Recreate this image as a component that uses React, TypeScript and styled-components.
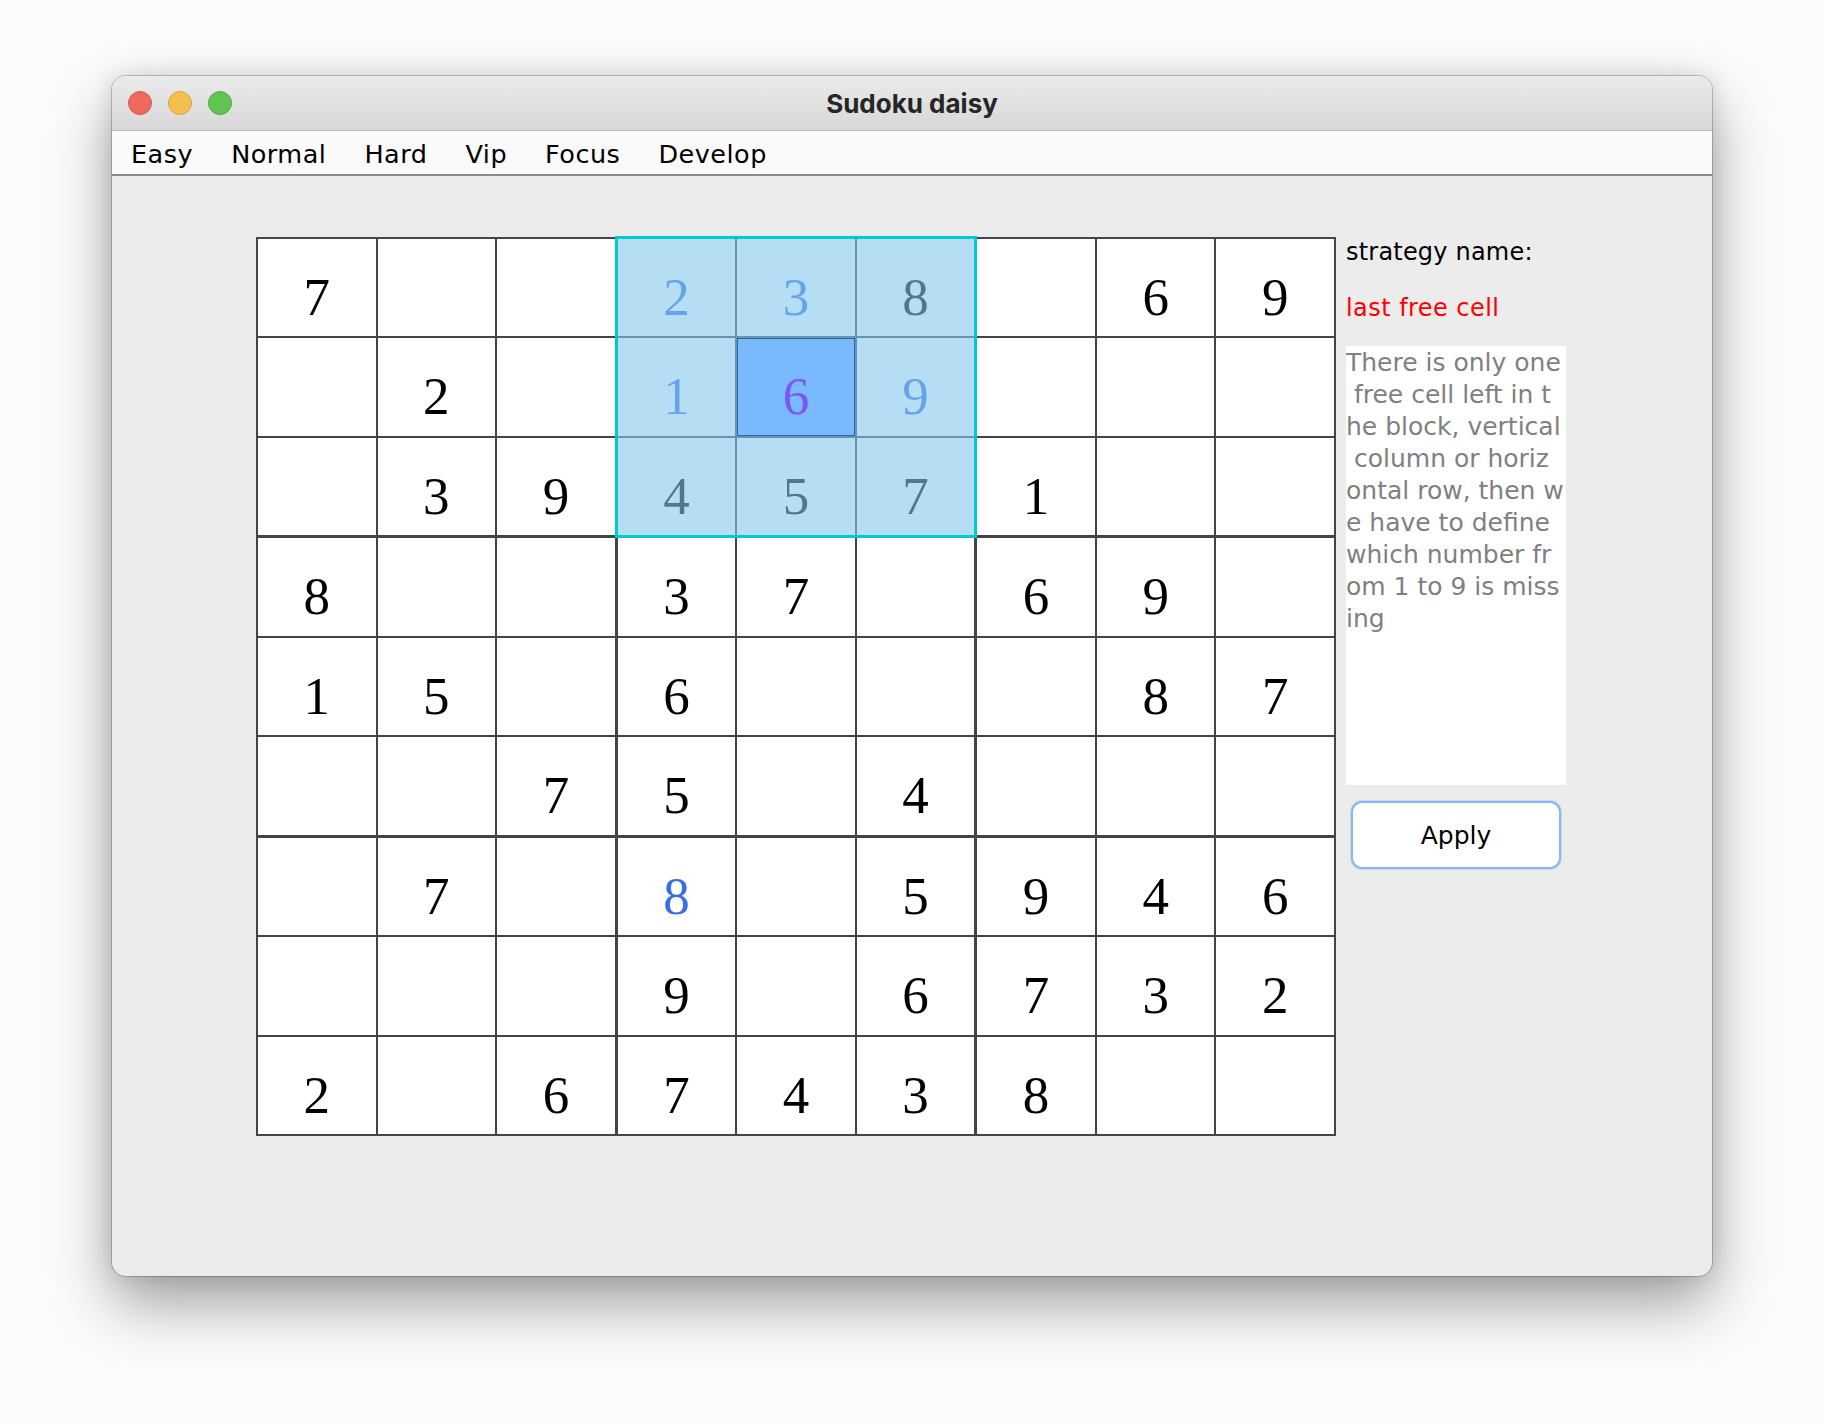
import styled, { createGlobalStyle } from 'styled-components';

const GlobalStyle = createGlobalStyle`
  html, body {
    margin: 0;
    padding: 0;
    background: #ffffff;
  }
  * {
    box-sizing: border-box;
  }
`;

const UI_FONT = `"DejaVu Sans", "Liberation Sans", sans-serif`;

const Page = styled.div`
  width: 1824px;
  height: 1424px;
  padding: 76px 112px;
  background: #fbfbfb;
`;

const Window = styled.div`
  width: 1600px;
  height: 1200px;
  border-radius: 14px;
  overflow: hidden;
  background: #ececec;
  display: flex;
  flex-direction: column;
  box-shadow: 0 0 0 1px rgba(0, 0, 0, 0.2), 0 28px 60px rgba(0, 0, 0, 0.36),
    0 0 24px rgba(0, 0, 0, 0.12);
`;

const TitleBar = styled.div`
  height: 55px;
  flex: none;
  display: flex;
  align-items: center;
  position: relative;
  background: linear-gradient(#ebebeb, #d7d7d7);
  border-bottom: 1px solid #bfbfbf;
  padding-left: 16px;
`;

const Lights = styled.div`
  display: flex;
  gap: 16px;
`;

const Light = styled.span<{ $fill: string; $edge: string }>`
  width: 24px;
  height: 24px;
  border-radius: 50%;
  background: ${(p) => p.$fill};
  border: 1px solid ${(p) => p.$edge};
`;

const Title = styled.div`
  position: absolute;
  left: 0;
  right: 0;
  text-align: center;
  font-family: Inter, "DejaVu Sans", sans-serif;
  font-weight: 700;
  font-size: 26px;
  color: #262626;
  pointer-events: none;
`;

const MenuBar = styled.nav`
  height: 45px;
  flex: none;
  display: flex;
  align-items: center;
  background: #fafafa;
  border-bottom: 2px solid #8c8c8c;
  padding-top: 3px;
`;

const MenuItem = styled.span`
  font-family: ${UI_FONT};
  font-size: 25.5px;
  letter-spacing: 0.5px;
  color: #000;
  padding: 0 19px;
`;

const Content = styled.div`
  flex: 1;
  display: flex;
  align-items: flex-start;
  gap: 10px;
  padding: 61px 0 0 144px;
`;

const Board = styled.div`
  width: 1080px;
  height: 899px;
  padding: 2px;
  gap: 3px;
  background: #444444;
  display: grid;
  grid-template-columns: repeat(3, 1fr);
  grid-template-rows: repeat(3, 1fr);
`;

const Block = styled.div`
  position: relative;
  display: grid;
  grid-template-columns: repeat(3, 1fr);
  grid-template-rows: repeat(3, 1fr);
  gap: 2px;
`;

const Highlight = styled.div`
  position: absolute;
  inset: -3px;
  z-index: 1;
  border: 3px solid #00cccc;
  background: rgba(131, 200, 238, 0.6);
  pointer-events: none;
`;

type Kind = 'given' | 'user' | 'picked';

const digitColor: Record<Kind, string> = {
  given: '#000000',
  user: '#3a6fe0',
  picked: '#7b55f5',
};

const Cell = styled.div<{ $kind: Kind; $picked?: boolean }>`
  background: ${(p) => (p.$picked ? '#79b9fd' : '#ffffff')};
  border: ${(p) => (p.$picked ? '1px solid #2f66b3' : 'none')};
  position: ${(p) => (p.$picked ? 'relative' : 'static')};
  z-index: ${(p) => (p.$picked ? 2 : 'auto')};
  display: flex;
  justify-content: center;
  align-items: flex-start;
  padding-top: ${(p) => (p.$picked ? 31 : 32)}px;
  font-family: "Liberation Serif", "Times New Roman", serif;
  font-size: 53px;
  line-height: 53px;
  color: ${(p) => digitColor[p.$kind]};
`;

const Panel = styled.aside`
  width: 220px;
  display: flex;
  flex-direction: column;
  font-family: ${UI_FONT};
  font-size: 24px;
  line-height: 30px;
`;

const Label = styled.div<{ $red?: boolean }>`
  color: ${(p) => (p.$red ? '#ff0000' : '#000000')};
  letter-spacing: ${(p) => (p.$red ? 0.45 : 0.2)}px;
  margin-bottom: ${(p) => (p.$red ? 23 : 26)}px;
`;

const Notes = styled.div`
  height: 439px;
  background: #ffffff;
  color: #808080;
  font-size: 25px;
  padding-top: 1px;
  line-height: 32px;
  white-space: pre;
  overflow: hidden;
`;

const ApplyButton = styled.button`
  margin: 16px 0 0 5px;
  width: 210px;
  height: 68px;
  border-radius: 11px;
  border: 2px solid #88b7ee;
  box-shadow: 0 0 0 1px rgba(136, 183, 238, 0.35);
  background: #ffffff;
  font-family: ${UI_FONT};
  font-size: 25px;
  color: #000;
  cursor: pointer;
`;

const rows = [
  '7..238.69',
  '.2.169...',
  '.394571..',
  '8..37.69.',
  '15.6...87',
  '..75.4...',
  '.7.8.5946',
  '...9.6732',
  '2.67438..',
];

const userCells = new Set(['0-3', '0-4', '1-3', '1-5', '6-3']);
const picked = '1-4';
const highlightBlock = 1;

const menus = ['Easy', 'Normal', 'Hard', 'Vip', 'Focus', 'Develop'];

const notes = [
  'There is only one',
  ' free cell left in t',
  'he block, vertical',
  ' column or horiz',
  'ontal row, then w',
  'e have to define',
  'which number fr',
  'om 1 to 9 is miss',
  'ing',
];

function blockCells(b: number) {
  const br = Math.floor(b / 3) * 3;
  const bc = (b % 3) * 3;
  const out: { key: string; value: string; kind: Kind }[] = [];
  for (let r = br; r < br + 3; r++) {
    for (let c = bc; c < bc + 3; c++) {
      const key = `${r}-${c}`;
      const ch = rows[r][c];
      const kind: Kind = key === picked ? 'picked' : userCells.has(key) ? 'user' : 'given';
      out.push({ key, value: ch === '.' ? '' : ch, kind });
    }
  }
  return out;
}

export default function App() {
  return (
    <Page>
      <GlobalStyle />
      <Window>
        <TitleBar>
          <Lights>
            <Light $fill="#ee6a5f" $edge="#d5574d" />
            <Light $fill="#f5bf4f" $edge="#d9a33e" />
            <Light $fill="#61c554" $edge="#4dab40" />
          </Lights>
          <Title>Sudoku daisy</Title>
        </TitleBar>
        <MenuBar>
          {menus.map((m) => (
            <MenuItem key={m}>{m}</MenuItem>
          ))}
        </MenuBar>
        <Content>
          <Board>
            {Array.from({ length: 9 }, (_, b) => (
              <Block key={b}>
                {blockCells(b).map((cell) => (
                  <Cell key={cell.key} $kind={cell.kind} $picked={cell.key === picked}>
                    {cell.value}
                  </Cell>
                ))}
                {b === highlightBlock && <Highlight />}
              </Block>
            ))}
          </Board>
          <Panel>
            <Label>strategy name:</Label>
            <Label $red>last free cell</Label>
            <Notes>{notes.join('\n')}</Notes>
            <ApplyButton>Apply</ApplyButton>
          </Panel>
        </Content>
      </Window>
    </Page>
  );
}
